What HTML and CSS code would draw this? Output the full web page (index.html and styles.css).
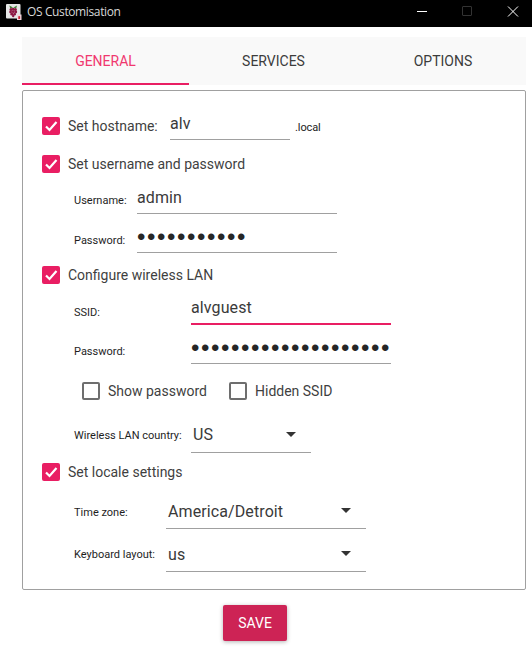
FILE: index.html
```html
<!DOCTYPE html>
<html lang="en">
<head>
<meta charset="utf-8">
<title>OS Customisation</title>
<link rel="stylesheet" href="styles.css">
</head>
<body>
<header class="titlebar">
  <svg class="app-icon" viewBox="0 0 16 16" width="16" height="16" aria-hidden="true">
    <rect x="0" y="0" width="14.5" height="14.5" rx="1" fill="#e6e6e6"/>
    <path d="M3.4 1.6 L7 3.6 L4.2 4.4Z M11 1.6 L7.4 3.6 L10.2 4.4Z" fill="#3f7f35"/>
    <g fill="#8c1742">
      <circle cx="5" cy="5.6" r="1.5"/>
      <circle cx="9.4" cy="5.6" r="1.5"/>
      <circle cx="7.2" cy="5" r="1.3"/>
      <circle cx="4.6" cy="8" r="1.4"/>
      <circle cx="7.2" cy="7.6" r="1.5"/>
      <circle cx="9.8" cy="8" r="1.4"/>
      <circle cx="5.8" cy="10.2" r="1.4"/>
      <circle cx="8.6" cy="10.2" r="1.4"/>
      <circle cx="7.2" cy="12" r="1.2"/>
    </g>
    <rect x="11" y="10.5" width="4.5" height="5.5" fill="#f0d4dc"/>
    <rect x="12.3" y="12.2" width="1.8" height="2.8" fill="#c8202f"/>
  </svg>
  <span class="window-title">OS Customisation</span>
  <div class="window-buttons">
    <svg class="win-btn" viewBox="0 0 46 27" width="46" height="27" aria-hidden="true"><path d="M23 11.5H33" stroke="#fff" fill="none"/></svg>
    <svg class="win-btn" viewBox="0 0 46 27" width="46" height="27" aria-hidden="true"><rect x="22.5" y="6.5" width="9" height="9" rx="0.5" stroke="#333" fill="none"/></svg>
    <svg class="win-btn" viewBox="0 0 46 27" width="46" height="27" aria-hidden="true"><path d="M22 6.5L32 16.5M32 6.5L22 16.5" stroke="#fff" fill="none"/></svg>
  </div>
</header>

<main class="dialog">
  <nav class="tabs">
    <div class="tab tab-active">GENERAL</div>
    <div class="tab">SERVICES</div>
    <div class="tab tab-last">OPTIONS</div>
  </nav>

  <section class="card">
    <div class="row row-hostname">
      <span class="check checked"><svg viewBox="0 0 18 18"><path d="M4 9.5l3.5 3.5L14.5 5"/></svg></span>
      <span class="check-label">Set hostname:</span>
      <div class="field field-host field-text">alv</div>
      <span class="suffix">.local</span>
    </div>

    <div class="row check-row gap-user">
      <span class="check checked"><svg viewBox="0 0 18 18"><path d="M4 9.5l3.5 3.5L14.5 5"/></svg></span>
      <span class="check-label">Set username and password</span>
    </div>
    <div class="row sub-row gap-8">
      <span class="label label-user">Username:</span>
      <div class="field field-user field-text">admin</div>
    </div>
    <div class="row sub-row gap-6">
      <span class="label label-user label-pass">Password:</span>
      <div class="field field-user field-text field-dots"><span class="dots">•••••••••••</span></div>
    </div>

    <div class="row check-row gap-13">
      <span class="check checked"><svg viewBox="0 0 18 18"><path d="M4 9.5l3.5 3.5L14.5 5"/></svg></span>
      <span class="check-label">Configure wireless LAN</span>
    </div>
    <div class="row sub-row gap-8">
      <span class="label label-wifi label-low">SSID:</span>
      <div class="field field-wifi field-focus">alvguest</div>
    </div>
    <div class="row sub-row gap-6">
      <span class="label label-wifi label-pass">Password:</span>
      <div class="field field-wifi field-text field-dots"><span class="dots">••••••••••••••••••••</span></div>
    </div>

    <div class="row check-row gap-18 options-row">
      <span class="check"></span>
      <span class="check-label label-show">Show password</span>
      <span class="check"></span>
      <span class="check-label">Hidden SSID</span>
    </div>

    <div class="row sub-row gap-20">
      <span class="label label-country">Wireless LAN country:</span>
      <div class="field field-country field-combo-high">US<span class="caret"></span></div>
    </div>

    <div class="row check-row gap-10">
      <span class="check checked"><svg viewBox="0 0 18 18"><path d="M4 9.5l3.5 3.5L14.5 5"/></svg></span>
      <span class="check-label">Set locale settings</span>
    </div>
    <div class="row sub-row gap-15">
      <span class="label label-locale label-mid">Time zone:</span>
      <div class="field field-locale field-combo">America/Detroit<span class="caret"></span></div>
    </div>
    <div class="row sub-row gap-10">
      <span class="label label-locale label-kbd">Keyboard layout:</span>
      <div class="field field-locale field-combo">us<span class="caret"></span></div>
    </div>
  </section>

  <div class="actions"><button class="save" type="button">SAVE</button></div>
</main>
</body>
</html>
```
FILE: styles.css
```css
* { box-sizing: border-box; }
html, body { margin: 0; padding: 0; }
body {
  width: 532px;
  height: 655px;
  overflow: hidden;
  background: #fff;
  font-family: Roboto, "Liberation Sans", sans-serif;
  color: #3a3a3a;
}
.titlebar {
  height: 27px;
  background: #000;
  display: flex;
  align-items: center;
  padding-left: 6px;
  color: #d8d8d8;
}
.app-icon { flex: none; margin-top: -3px; }
.window-title {
  margin-left: 5px;
  margin-top: -5px;
  font: 12px "Open Sans", "Noto Sans", sans-serif;
  letter-spacing: -0.38px;
}
.window-buttons { margin-left: auto; display: flex; }
.win-btn { display: block; }

.dialog { padding: 10px 6px 0 22px; }
.tabs {
  display: grid;
  grid-template-columns: 167px 169px 168px;
  height: 48px;
  background: #f9f9f9;
}
.tab {
  display: flex;
  align-items: center;
  justify-content: center;
  font-size: 14px;
  color: #3c3c3c;
}
.tab-last { padding-left: 2px; }
.tab-active {
  color: #f0386f;
  border-bottom: 2px solid #e91e63;
  padding-top: 2px;
}
.card {
  height: 500px;
  margin-top: 5px;
  padding: 16px 0 0 19px;
  border: 1px solid #a0a0a0;
  border-radius: 2px;
}
.row { display: flex; align-items: center; }
.row-hostname { height: 33px; align-items: flex-end; }
.row-hostname .check { margin-bottom: 5px; }
.row-hostname .check-label { margin-bottom: 6px; width: 102px; }
.check-row { height: 18px; }
.sub-row { height: 33px; margin-left: 32px; }
.gap-user { margin-top: 15px; }
.gap-6 { margin-top: 6px; }
.gap-8 { margin-top: 8px; }
.gap-10 { margin-top: 10px; }
.gap-13 { margin-top: 13px; }
.gap-15 { margin-top: 15px; }
.gap-18 { margin-top: 18px; }
.gap-20 { margin-top: 20px; }

.check {
  flex: none;
  width: 18px;
  height: 18px;
  border: 2px solid #6e6e6e;
  border-radius: 2px;
  background: #fff;
}
.checked {
  border: 0;
  background: #e91e63;
}
.check svg { display: block; width: 18px; height: 18px; }
.check path { fill: none; stroke: #fff; stroke-width: 2.2; }
.check-label { margin-left: 8px; font-size: 14px; color: #3f3f3f; white-space: nowrap; }
.suffix { margin: 0 0 6px 5px; font-size: 11px; color: #222; letter-spacing: -0.1px; }

.label { flex: none; font-size: 11px; color: #1e1e1e; padding-top: 6px; white-space: nowrap; }
.label-low { padding-top: 8px; }
.label-pass { padding-top: 8px; }
.label-mid { padding-top: 0; }
.label-kbd { padding: 0 0 2px; }
.label-user { width: 63px; }
.label-wifi { width: 117px; }
.label-country { width: 117px; padding: 0 0 3px; }
.label-locale { width: 92px; }
.label-show { margin-right: 21px; width: 100px; }
.options-row { margin-left: 40px; }

.field {
  position: relative;
  flex: none;
  height: 33px;
  display: flex;
  align-items: center;
  border-bottom: 1px solid #a0a0a0;
  font-size: 16px;
  color: #3a3a3a;
  padding: 0 2px;
  letter-spacing: 0.1px;
}
.field-text { padding: 0; }
.field-dots { padding-top: 2px; }
.field-combo { padding-bottom: 2px; }
.field-combo-high { padding-bottom: 4px; }
.field-host { width: 120px; }
.field-user { width: 200px; }
.field-wifi { width: 200px; }
.field-country { width: 120px; }
.field-locale { width: 200px; }
.field-focus { border-bottom: 2px solid #e91e63; padding: 0; }
.dots {
  font-family: "Liberation Sans", sans-serif;
  font-size: 24px;
  letter-spacing: 1.6px;
  line-height: 1;
  color: #262626;
}
.caret {
  position: absolute;
  right: 15px;
  top: 12px;
  width: 0;
  height: 0;
  border-left: 5px solid transparent;
  border-right: 5px solid transparent;
  border-top: 5px solid #333;
}

.actions { margin-top: 15px; margin-left: 201px; }
.save {
  display: block;
  width: 64px;
  height: 36px;
  border: 0;
  border-radius: 2px;
  background: #cd2355;
  color: #fff;
  font: 14px Roboto, sans-serif;
  box-shadow: 0 1px 4px rgba(0, 0, 0, 0.3);
  padding: 0;
}
```
